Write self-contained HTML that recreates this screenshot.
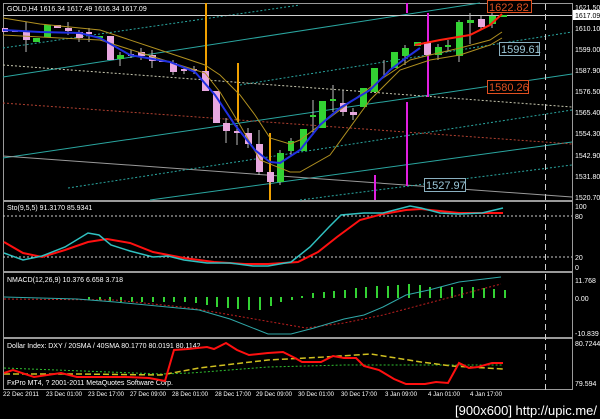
<!DOCTYPE html>
<html><head><meta charset="utf-8"><style>
html,body{margin:0;padding:0;background:#000;width:600px;height:419px;overflow:hidden}
svg{display:block}
text{font-family:"Liberation Sans",sans-serif;fill:#fff}
</style></head><body>
<svg width="600" height="419" viewBox="0 0 600 419" xmlns="http://www.w3.org/2000/svg">
<rect width="600" height="419" fill="#000"/>
<g fill="none" stroke="#9a9a9a" stroke-width="1">
<rect x="3.5" y="3.5" width="569" height="386"/>
</g>
<g stroke="#9a9a9a" stroke-width="2">
<line x1="3" y1="201" x2="573" y2="201"/>
<line x1="3" y1="272" x2="573" y2="272"/>
<line x1="3" y1="338" x2="573" y2="338"/>
</g>
<g stroke-width="1" fill="none">
<line x1="3" y1="77" x2="480" y2="3" stroke="#2aa6a0"/>
<line x1="3" y1="158" x2="572" y2="74" stroke="#2aa6a0"/>
<line x1="150" y1="200" x2="572" y2="142" stroke="#2aa6a0"/>
<line x1="3" y1="156" x2="572" y2="197" stroke="#9a9a9a"/>
<line x1="3" y1="48" x2="300" y2="5" stroke="#2aa6a0" stroke-dasharray="2,2"/>
<line x1="240" y1="85" x2="572" y2="32" stroke="#2aa6a0" stroke-dasharray="2,2"/>
<line x1="68" y1="188" x2="572" y2="110" stroke="#2aa6a0" stroke-dasharray="2,2"/>
<line x1="300" y1="200" x2="572" y2="165" stroke="#2aa6a0" stroke-dasharray="2,2"/>
<line x1="3" y1="65" x2="572" y2="107" stroke="#c8c8b0" stroke-dasharray="2,2"/>
<line x1="3" y1="103" x2="572" y2="144" stroke="#b04030" stroke-dasharray="2,2"/>
<line x1="3" y1="15.5" x2="572" y2="15.5" stroke="#cfcfcf"/>
<line x1="545.5" y1="4" x2="545.5" y2="390" stroke="#d0d0d0" stroke-dasharray="6,4"/>
</g>
<g stroke-width="2">
<line x1="206" y1="3" x2="206" y2="76" stroke="#f0a000"/>
<line x1="238" y1="63" x2="238" y2="122" stroke="#f0a000"/>
<line x1="270" y1="133" x2="270" y2="200" stroke="#f0a000"/>
<line x1="407" y1="3" x2="407" y2="13" stroke="#e020e0"/>
<line x1="407" y1="102" x2="407" y2="186" stroke="#e020e0"/>
<line x1="428" y1="13" x2="428" y2="97" stroke="#e020e0"/>
<line x1="375" y1="175" x2="375" y2="200" stroke="#e020e0"/>
</g>
<g stroke="#bbb" stroke-width="1">
<line x1="26" y1="22" x2="26" y2="52"/><line x1="68" y1="22" x2="68" y2="35"/><line x1="79" y1="30" x2="79" y2="42"/>
<line x1="89" y1="28" x2="89" y2="42"/><line x1="120" y1="52" x2="120" y2="66"/><line x1="131" y1="50" x2="131" y2="58"/>
<line x1="141" y1="48" x2="141" y2="60"/><line x1="152" y1="50" x2="152" y2="68"/><line x1="173" y1="60" x2="173" y2="75"/>
<line x1="184" y1="66" x2="184" y2="74"/><line x1="194" y1="66" x2="194" y2="74"/><line x1="226" y1="118" x2="226" y2="143"/>
<line x1="237" y1="125" x2="237" y2="145"/><line x1="248" y1="128" x2="248" y2="148"/><line x1="259" y1="130" x2="259" y2="175"/>
<line x1="270" y1="170" x2="270" y2="185"/><line x1="280" y1="150" x2="280" y2="185"/><line x1="291" y1="138" x2="291" y2="155"/>
<line x1="313" y1="100" x2="313" y2="135"/><line x1="333" y1="85" x2="333" y2="112"/><line x1="343" y1="90" x2="343" y2="116"/>
<line x1="353" y1="108" x2="353" y2="120"/><line x1="384" y1="60" x2="384" y2="75"/><line x1="405" y1="45" x2="405" y2="65"/>
<line x1="438" y1="44" x2="438" y2="60"/><line x1="448" y1="40" x2="448" y2="52"/><line x1="459" y1="20" x2="459" y2="62"/>
<line x1="470" y1="13" x2="470" y2="44"/><line x1="481" y1="16" x2="481" y2="30"/><line x1="492" y1="12" x2="492" y2="28"/>
</g>
<g fill="#e8a8e0">
<rect x="2" y="28" width="6" height="4"/><rect x="12" y="30" width="6" height="2"/><rect x="23" y="31" width="7" height="9"/>
<rect x="54" y="25" width="7" height="3"/><rect x="65" y="28" width="7" height="3"/><rect x="76" y="32" width="7" height="6"/>
<rect x="107" y="36" width="7" height="24"/><rect x="138" y="52" width="7" height="4"/><rect x="149" y="55" width="7" height="6"/>
<rect x="170" y="63" width="7" height="9"/><rect x="202" y="71" width="7" height="20"/><rect x="213" y="91" width="7" height="32"/>
<rect x="223" y="123" width="7" height="8"/><rect x="245" y="133" width="7" height="11"/><rect x="256" y="144" width="7" height="28"/>
<rect x="267" y="172" width="7" height="10"/><rect x="340" y="103" width="7" height="9"/><rect x="350" y="112" width="7" height="3"/>
<rect x="424" y="42" width="7" height="13"/><rect x="478" y="19" width="7" height="8"/>
<rect x="86" y="32" width="6" height="2"/><rect x="128" y="54" width="6" height="2"/><rect x="159" y="60" width="6" height="2"/>
<rect x="181" y="69" width="6" height="2"/><rect x="191" y="69" width="6" height="2"/><rect x="234" y="131" width="6" height="2"/>
</g>
<g fill="#33d233">
<rect x="33" y="38" width="7" height="4"/><rect x="44" y="25" width="7" height="12"/><rect x="96" y="36" width="7" height="2"/>
<rect x="117" y="55" width="7" height="4"/><rect x="277" y="153" width="7" height="29"/><rect x="288" y="141" width="6" height="10"/>
<rect x="300" y="129" width="7" height="22"/><rect x="319" y="101" width="7" height="27"/><rect x="360" y="88" width="7" height="19"/>
<rect x="371" y="68" width="7" height="24"/><rect x="391" y="52" width="7" height="16"/><rect x="402" y="48" width="7" height="8"/>
<rect x="414" y="42" width="7" height="4"/><rect x="435" y="47" width="7" height="8"/><rect x="456" y="22" width="7" height="34"/>
<rect x="467" y="20" width="7" height="3"/><rect x="489" y="16" width="7" height="8"/><rect x="499" y="15" width="8" height="2"/>
<rect x="330" y="99" width="6" height="2"/><rect x="310" y="115" width="6" height="2"/><rect x="445" y="45" width="6" height="2"/>
</g>
<g fill="none" stroke-width="1">
<polyline stroke="#b09020" points="3,18 40,24 100,30 160,50 205,65 220,75 240,95 255,115 270,138 290,144 300,140 340,110 380,80 410,60 430,55 460,48 490,40 502,32"/>
<polyline stroke="#b09020" points="3,35 60,38 100,40 170,62 205,73 220,92 240,125 260,160 290,172 300,172 330,155 370,100 400,70 430,60 460,55 490,45 502,38"/>
<polyline stroke="#2030e0" stroke-width="2" points="3,30 40,32 80,33 100,38 130,55 170,62 195,72 215,95 235,125 255,150 270,162 280,163 300,150 320,125 340,108 370,90 390,70 410,55 420,48"/>
<polyline stroke="#ff2010" stroke-width="2" points="415,45 440,40 470,35 490,25 502,14"/>
</g>
<g font-size="11">
<rect x="487.5" y="0.5" width="44" height="12" fill="#000" stroke="#e05020"/><text x="489" y="11" style="fill:#e05020">1622.82</text>
<rect x="499.5" y="42.5" width="40" height="13" fill="#000" stroke="#8ab0c0"/><text x="501" y="53" style="fill:#9cc8d8">1599.61</text>
<rect x="487.5" y="80.5" width="41" height="13" fill="#000" stroke="#e05020"/><text x="489" y="91" style="fill:#e05020">1580.26</text>
<rect x="424.5" y="178.5" width="41" height="13" fill="#000" stroke="#8ab0c0"/><text x="426" y="189" style="fill:#9cc8d8">1527.97</text>
</g>
<rect x="573" y="10" width="27" height="10" fill="#fff"/>
<g font-size="7">
<text x="7" y="11">GOLD,H4  1616.34 1617.49 1616.34 1617.09</text>
<text x="575" y="18" style="fill:#000">1617.09</text>
<text x="575" y="10">1621.50</text><text x="575" y="31">1610.10</text><text x="575" y="52">1599.00</text>
<text x="575" y="73">1587.90</text><text x="575" y="94">1576.50</text><text x="575" y="115">1565.40</text>
<text x="575" y="136">1554.30</text><text x="575" y="158">1542.90</text><text x="575" y="179">1531.80</text>
<text x="575" y="200">1520.70</text>
<text x="7" y="210">Sto(9,5,5) 91.3170 85.9341</text>
<text x="575" y="209">100</text><text x="575" y="219">80</text><text x="575" y="260">20</text><text x="575" y="270">0</text>
<text x="7" y="282">NMACD(12,26,9) 10.376 6.658 3.718</text>
<text x="575" y="283">11.768</text><text x="575" y="301">0.00</text><text x="575" y="336">-10.839</text>
<text x="7" y="348">Dollar Index: DXY / 20SMA / 40SMA 80.1770 80.0191 80.1142</text>
<text x="575" y="346">80.7244</text><text x="575" y="386">79.594</text>
<text x="7" y="385">FxPro MT4, ? 2001-2011 MetaQuotes Software Corp.</text>
</g>
<g font-size="6.5">
<text x="3" y="396" textLength="36" lengthAdjust="spacingAndGlyphs">22 Dec 2011</text>
<text x="46" y="396" textLength="36" lengthAdjust="spacingAndGlyphs">23 Dec 01:00</text>
<text x="88" y="396" textLength="36" lengthAdjust="spacingAndGlyphs">23 Dec 17:00</text>
<text x="130" y="396" textLength="36" lengthAdjust="spacingAndGlyphs">27 Dec 09:00</text>
<text x="172" y="396" textLength="36" lengthAdjust="spacingAndGlyphs">28 Dec 01:00</text>
<text x="215" y="396" textLength="36" lengthAdjust="spacingAndGlyphs">28 Dec 17:00</text>
<text x="256" y="396" textLength="36" lengthAdjust="spacingAndGlyphs">29 Dec 09:00</text>
<text x="298" y="396" textLength="36" lengthAdjust="spacingAndGlyphs">30 Dec 01:00</text>
<text x="341" y="396" textLength="36" lengthAdjust="spacingAndGlyphs">30 Dec 17:00</text>
<text x="385" y="396" textLength="32" lengthAdjust="spacingAndGlyphs">3 Jan 09:00</text>
<text x="428" y="396" textLength="32" lengthAdjust="spacingAndGlyphs">4 Jan 01:00</text>
<text x="470" y="396" textLength="32" lengthAdjust="spacingAndGlyphs">4 Jan 17:00</text>
</g>
<g fill="none" stroke-width="1">
<line x1="3" y1="216" x2="572" y2="216" stroke="#ccc" stroke-dasharray="2,2"/>
<line x1="3" y1="257" x2="572" y2="257" stroke="#ccc" stroke-dasharray="2,2"/>
<polyline stroke="#ff1010" stroke-width="2" points="4,242 23,253 42,257 65,250 88,242 107,239 130,243 153,252 184,258 214,262 245,264 268,264 298,262 318,252 337,237 360,220 383,214 406,210 421,209 440,211 459,213 482,213 503,213"/>
<polyline stroke="#30c0c0" stroke-width="1.5" points="4,253 23,260 42,256 65,247 88,233 99,235 111,245 130,251 153,257 168,256 184,260 207,263 230,263 253,266 268,266 291,262 310,247 329,227 341,215 364,213 383,213 410,206 421,208 440,213 459,214 482,213 503,208"/>
</g>
<g stroke="#33d233" stroke-width="2">
<line x1="89" y1="297" x2="89" y2="300"/><line x1="100" y1="297" x2="100" y2="300"/><line x1="110" y1="297" x2="110" y2="301"/>
<line x1="121" y1="297" x2="121" y2="302"/><line x1="132" y1="297" x2="132" y2="302"/><line x1="142" y1="297" x2="142" y2="302"/>
<line x1="153" y1="297" x2="153" y2="302"/><line x1="164" y1="297" x2="164" y2="302"/><line x1="174" y1="297" x2="174" y2="302"/>
<line x1="185" y1="297" x2="185" y2="302"/><line x1="196" y1="297" x2="196" y2="303"/><line x1="207" y1="297" x2="207" y2="305"/>
<line x1="217" y1="297" x2="217" y2="307"/><line x1="228" y1="297" x2="228" y2="308"/><line x1="238" y1="297" x2="238" y2="309"/>
<line x1="249" y1="297" x2="249" y2="310"/><line x1="260" y1="297" x2="260" y2="310"/><line x1="271" y1="297" x2="271" y2="306"/>
<line x1="281" y1="297" x2="281" y2="302"/><line x1="292" y1="297" x2="292" y2="300"/><line x1="302" y1="296" x2="302" y2="298"/>
<line x1="313" y1="293" x2="313" y2="298"/><line x1="324" y1="292" x2="324" y2="298"/><line x1="334" y1="291" x2="334" y2="298"/>
<line x1="345" y1="290" x2="345" y2="298"/><line x1="356" y1="288" x2="356" y2="298"/><line x1="366" y1="287" x2="366" y2="298"/>
<line x1="377" y1="286" x2="377" y2="298"/><line x1="388" y1="286" x2="388" y2="298"/><line x1="398" y1="285" x2="398" y2="298"/>
<line x1="409" y1="284" x2="409" y2="298"/><line x1="420" y1="285" x2="420" y2="298"/><line x1="430" y1="287" x2="430" y2="298"/>
<line x1="441" y1="287" x2="441" y2="298"/><line x1="452" y1="287" x2="452" y2="298"/><line x1="462" y1="287" x2="462" y2="298"/>
<line x1="473" y1="287" x2="473" y2="298"/><line x1="484" y1="288" x2="484" y2="298"/><line x1="494" y1="289" x2="494" y2="298"/>
<line x1="505" y1="290" x2="505" y2="298"/>
</g>
<g fill="none" stroke-width="1">
<polyline stroke="#c02020" stroke-dasharray="2,2" points="4,299 115,300 191,308 306,328 344,323 383,315 440,300 501,284"/>
<polyline stroke="#30a8a8" points="4,297 77,299 115,302 199,310 230,319 268,334 291,334 314,328 344,319 364,315 383,307 406,295 429,290 459,282 501,277"/>
</g>
<g fill="none">
<polyline stroke="#30c030" stroke-dasharray="2,2" points="4,368 161,374 191,373 268,367 344,365 503,365"/>
<polyline stroke="#d0c020" stroke-width="1.5" stroke-dasharray="6,3" points="4,374 77,374 161,375 199,368 268,360 325,357 371,354 421,362 452,366 503,369"/>
<polyline stroke="#ff1010" stroke-width="2" points="4,373 13,370 34,377 61,373 77,377 100,377 126,377 149,378 165,381 174,350 188,349 207,347 214,349 226,343 237,350 249,355 268,353 283,352 295,358 302,362 321,362 333,356 344,358 356,358 364,366 379,370 394,379 406,384 425,384 436,382 448,383 459,363 469,368 478,367 492,363 503,363"/>
</g>
<text x="455" y="415" font-size="13" textLength="142" lengthAdjust="spacingAndGlyphs">[900x600] http://upic.me/</text>
</svg>
</body></html>
